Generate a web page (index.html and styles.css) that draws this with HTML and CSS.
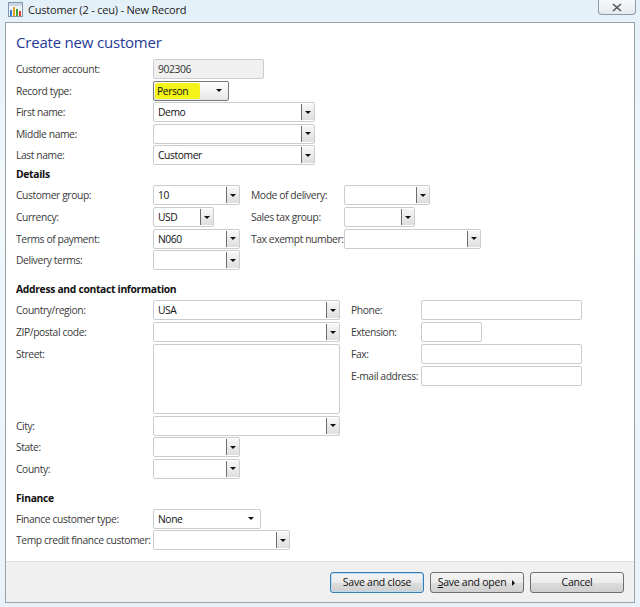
FILE: index.html
```html
<!DOCTYPE html>
<html lang="en">
<head>
    <meta charset="utf-8">
    <title>Customer (2 - ceu) - New Record</title>
    <link rel="stylesheet" href="styles.css">
</head>
<body>

<div class="window">
    <div class="titlebar">
        <svg class="app-icon" width="15" height="15" viewBox="0 0 15 15">
            <rect x="0.5" y="0.5" width="14" height="14" fill="#eef3f8" stroke="#8496ad"/>
            <rect x="1" y="1" width="13" height="3" fill="#c9d6e4"/>
            <rect x="2" y="8" width="2" height="6" fill="#2f7bd6"/>
            <rect x="5" y="5" width="2" height="9" fill="#e8a21b"/>
            <rect x="8" y="7" width="2" height="7" fill="#3aa534"/>
            <rect x="11" y="9" width="2" height="5" fill="#d9412b"/>
        </svg>
        <span class="win-title">Customer (2 - ceu) - New Record</span>
        <div class="close-btn">
            <svg width="10" height="9" viewBox="0 0 10 9">
                <path d="M1 1 L9 8 M9 1 L1 8" stroke="#555" stroke-width="1.6" fill="none"/>
            </svg>
        </div>
    </div>

    <div class="panel">
        <div class="content">
            <h1>Create new customer</h1>

            <div class="rows">
                <div class="row"><label>Customer account:</label><div class="field readonly w111">902306</div></div>
                <div class="row"><label>Record type:</label><div class="combo combo-dark w76"><span class="mark">Person</span><i class="tri"></i></div></div>
                <div class="row"><label>First name:</label><div class="field w162">Demo<span class="drop"><i class="tri"></i></span></div></div>
                <div class="row"><label>Middle name:</label><div class="field w162"><span class="drop"><i class="tri"></i></span></div></div>
                <div class="row"><label>Last name:</label><div class="field w162">Customer<span class="drop"><i class="tri"></i></span></div></div>
            </div>

            <h2>Details</h2>
            <div class="grid details">
                <label>Customer group:</label><div class="field w87">10<span class="drop"><i class="tri"></i></span></div>
                <label>Mode of delivery:</label><div class="field w86"><span class="drop"><i class="tri"></i></span></div>
                <label>Currency:</label><div class="field w61">USD<span class="drop"><i class="tri"></i></span></div>
                <label>Sales tax group:</label><div class="field w71"><span class="drop"><i class="tri"></i></span></div>
                <label>Terms of payment:</label><div class="field w87">N060<span class="drop"><i class="tri"></i></span></div>
                <label>Tax exempt number:</label><div class="field w137"><span class="drop"><i class="tri"></i></span></div>
                <label>Delivery terms:</label><div class="field w87"><span class="drop"><i class="tri"></i></span></div>
            </div>

            <h2 class="gap">Address and contact information</h2>
            <div class="address">
                <div class="grid addr-left">
                    <label>Country/region:</label><div class="field w187">USA<span class="drop"><i class="tri"></i></span></div>
                    <label>ZIP/postal code:</label><div class="field w187"><span class="drop"><i class="tri"></i></span></div>
                    <label>Street:</label><div class="field w187 tall"></div>
                    <label>City:</label><div class="field w187"><span class="drop"><i class="tri"></i></span></div>
                    <label>State:</label><div class="field w87"><span class="drop"><i class="tri"></i></span></div>
                    <label>County:</label><div class="field w87"><span class="drop"><i class="tri"></i></span></div>
                </div>
                <div class="grid addr-right">
                    <label>Phone:</label><div class="field w161"></div>
                    <label>Extension:</label><div class="field w61"></div>
                    <label>Fax:</label><div class="field w161"></div>
                    <label>E-mail address:</label><div class="field w161"></div>
                </div>
            </div>

            <h2 class="gap">Finance</h2>
            <div class="rows">
                <div class="row"><label>Finance customer type:</label><div class="combo w108">None<i class="tri"></i></div></div>
                <div class="row"><label>Temp credit finance customer:</label><div class="field w137"><span class="drop"><i class="tri"></i></span></div></div>
            </div>
        </div>

        <div class="footer">
            <button class="btn btn-default">Save and close</button>
            <button class="btn btn-split"><u>S</u>ave and open<i class="arrow-right"></i></button>
            <button class="btn">Cancel</button>
        </div>
    </div>
</div>

</body>
</html>
```

FILE: styles.css
```css
* {
    margin: 0;
    padding: 0;
    box-sizing: border-box;
}

body {
    font-family: 'Open Sans', 'Noto Sans', sans-serif;
    font-size: 10.3px;
    letter-spacing: -0.4px;
    color: #3a3a3a;
    background: #e9f3f9;
}

label {
    white-space: nowrap;
}

.window {
    width: 640px;
    height: 607px;
    padding: 0 5px 4px 5px;
    display: flex;
    flex-direction: column;
    background: linear-gradient(180deg, #e4f0f8 0%, #f2f8fc 30%, #e8f2f9 100%);
}

/* title bar */
.titlebar {
    height: 22px;
    flex-shrink: 0;
    display: flex;
    align-items: center;
    padding-bottom: 3px;
    position: relative;
}

.app-icon {
    margin: 0 5px 0 3px;
}

.win-title {
    font-size: 11px;
    letter-spacing: -0.2px;
    color: #1b1b1b;
}

.close-btn {
    position: absolute;
    right: -1px;
    top: 0;
    width: 38px;
    height: 15px;
    border: 1px solid #8f9aa6;
    border-top: none;
    border-radius: 0 0 4px 4px;
    background: linear-gradient(180deg, #f6f9fb, #e3eaf0);
    display: flex;
    align-items: center;
    justify-content: center;
}

/* main panel */
.panel {
    flex: 1;
    min-height: 0;
    background: #fff;
    border: 1px solid #9aa2aa;
    display: flex;
    flex-direction: column;
}

.content {
    flex: 1;
    padding: 8px 10px 0 10px;
}

h1 {
    font-size: 15px;
    font-weight: normal;
    letter-spacing: -0.2px;
    color: #253a96;
    line-height: 22px;
    margin-bottom: 6px;
}

h2 {
    font-size: 10.3px;
    font-weight: bold;
    letter-spacing: -0.3px;
    color: #111;
    line-height: 18px;
    margin-top: 0;
    margin-bottom: 2px;
}

h2.gap {
    margin-top: 10px;
}

.rows {
    display: flex;
    flex-direction: column;
    gap: 1.6px;
}

.row {
    display: flex;
    align-items: center;
    height: 20px;
}

.row label {
    width: 137px;
}

.grid {
    display: grid;
    row-gap: 1.7px;
    align-items: start;
    align-content: start;
}

.grid label {
    line-height: 20px;
}

.details {
    grid-template-columns: 137px 98px 93px auto;
}

.address {
    display: flex;
    align-items: flex-start;
}

.addr-left {
    grid-template-columns: 137px 198px;
}

.addr-right {
    grid-template-columns: 70px auto;
}

/* input fields */
.field {
    position: relative;
    height: 20px;
    border: 1px solid #c9cdd2;
    border-radius: 2px;
    background: #fff;
    color: #111;
    line-height: 18px;
    padding-left: 4px;
}

.field.readonly {
    background: #f0f0f0;
    color: #333;
}

.field.tall {
    height: 70px;
}

.drop {
    position: absolute;
    top: 1px;
    right: 0;
    bottom: 1px;
    width: 13px;
    border-left: 1px solid #6d6d6d;
    background: linear-gradient(180deg, #f7f7f7, #dedede);
    display: flex;
    align-items: center;
    justify-content: center;
}

.tri {
    display: block;
    width: 0;
    height: 0;
    border-left: 3px solid transparent;
    border-right: 3px solid transparent;
    border-top: 3px solid #111;
}

.combo {
    height: 20px;
    border: 1px solid #c9cdd2;
    border-radius: 2px;
    background: #fff;
    color: #111;
    line-height: 18px;
    padding: 0 6px 0 4px;
    display: flex;
    align-items: center;
    justify-content: space-between;
}

.combo-dark {
    border-color: #777;
    background: linear-gradient(180deg, #ffffff, #e6e6e6);
    padding-left: 1px;
}

.mark {
    background: #f3f31a;
    padding: 0 12px 0 2px;
    line-height: 16px;
    border-radius: 2px;
}

.w61 { width: 61px; }
.w71 { width: 71px; }
.w76 { width: 76px; }
.w86 { width: 86px; }
.w87 { width: 87px; }
.w108 { width: 108px; }
.w111 { width: 111px; }
.w137 { width: 137px; }
.w161 { width: 161px; }
.w162 { width: 162px; }
.w187 { width: 187px; }

/* footer buttons */
.footer {
    height: 41px;
    flex-shrink: 0;
    background: #f0f0f0;
    border-top: 1px solid #dcdcdc;
    display: flex;
    justify-content: flex-end;
    align-items: center;
    gap: 6px;
    padding-right: 10px;
}

.btn {
    width: 94px;
    height: 21px;
    font-family: 'Open Sans', 'Noto Sans', sans-serif;
    font-size: 10.5px;
    letter-spacing: -0.25px;
    color: #111;
    border: 1px solid #707070;
    border-radius: 3px;
    background: linear-gradient(180deg, #f4f4f4 0%, #ebebeb 50%, #dddddd 51%, #cfcfcf 100%);
    display: flex;
    align-items: center;
    justify-content: center;
    position: relative;
}

.btn-default {
    border-color: #3c7fb1;
    box-shadow: inset 0 0 0 1px #b9dcf2;
}

.btn-split {
    padding-right: 10px;
}

.btn u {
    text-decoration: underline;
}

.arrow-right {
    position: absolute;
    right: 8px;
    top: 7px;
    width: 0;
    height: 0;
    border-top: 3px solid transparent;
    border-bottom: 3px solid transparent;
    border-left: 3px solid #111;
}
```
